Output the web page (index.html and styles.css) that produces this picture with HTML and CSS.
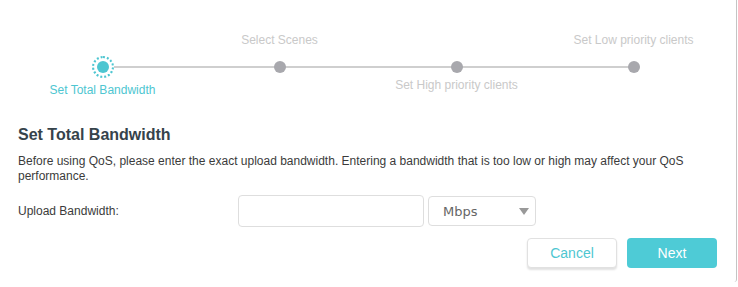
FILE: index.html
```html
<!DOCTYPE html>
<html>
<head>
  <title>QoS - Set Total Bandwidth</title>
  <link rel="stylesheet" href="styles.css">
</head>
<body>
<div class="wizard">
  <div class="stepper">
    <div class="step active">
      <span class="step-label top"></span>
      <span class="step-dot"></span>
      <span class="step-label bottom">Set Total Bandwidth</span>
    </div>
    <div class="step">
      <span class="step-label top">Select Scenes</span>
      <span class="step-dot"></span>
      <span class="step-label bottom"></span>
    </div>
    <div class="step">
      <span class="step-label top"></span>
      <span class="step-dot"></span>
      <span class="step-label bottom">Set High priority clients</span>
    </div>
    <div class="step last">
      <span class="step-label top">Set Low priority clients</span>
      <span class="step-dot"></span>
      <span class="step-label bottom"></span>
    </div>
  </div>

  <div class="wizard-body">
    <h2 class="wizard-title">Set Total Bandwidth</h2>
    <p class="wizard-desc">Before using QoS, please enter the exact upload bandwidth. Entering a bandwidth that is too low or high may affect your QoS performance.</p>

    <div class="form-row">
      <label for="upload-bw" class="form-label">Upload Bandwidth:</label>
      <input type="text" id="upload-bw" class="text-input" />
      <div class="select-box">
        <span class="select-value">Mbps</span>
        <span class="select-arrow"></span>
      </div>
    </div>

    <div class="wizard-controls">
      <button class="btn btn-cancel">Cancel</button>
      <button class="btn btn-next">Next</button>
    </div>
  </div>
</div>
</body>
</html>
```

FILE: styles.css
```css
html, body {
  margin: 0;
  padding: 0;
  background: #fff;
  font-family: "Liberation Sans", Arial, sans-serif;
}

.wizard {
  width: 736px;
  height: 282px;
  border-right: 1px solid #c4c4c4;
  border-bottom-right-radius: 3px;
}

/* stepper */
.stepper {
  display: grid;
  grid-template-columns: repeat(4, 177px);
  padding: 32px 0 0 14px;
}

.step {
  display: flex;
  flex-direction: column;
  align-items: center;
  position: relative;
}

.step::after {
  content: "";
  position: absolute;
  left: 50%;
  width: 177px;
  top: 34px;
  height: 2px;
  background: #cfcfcf;
  z-index: 0;
}

.step.last::after {
  display: none;
}

.step-label {
  display: block;
  height: 16px;
  line-height: 16px;
  font-size: 12px;
  color: #c9c9c9;
  white-space: nowrap;
}

.step-label.top {
  margin-bottom: 9px;
}

.step-dot {
  display: block;
  width: 12px;
  height: 12px;
  margin: 4px 0;
  border-radius: 50%;
  background: #a8a8ad;
  position: relative;
  z-index: 1;
}

.step.active .step-dot {
  background: #4ec6d1;
  box-shadow: 0 0 0 5px #fff;
}

.step.active .step-dot::before {
  content: "";
  position: absolute;
  left: -5px;
  top: -5px;
  width: 18px;
  height: 18px;
  border: 2px dotted #4ec6d1;
  border-radius: 50%;
}

.step.active .step-label.bottom {
  color: #4ec6d1;
  padding-top: 5px;
}

/* body */
.wizard-body {
  padding: 0 19px 0 18px;
}

.wizard-title {
  margin: 27px 0 0;
  font-size: 16px;
  line-height: 20px;
  font-weight: bold;
  color: #36434b;
}

.wizard-desc {
  margin: 9px 0 0;
  font-size: 12px;
  line-height: 15px;
  color: #3b3b3b;
  max-width: 680px;
}

.form-row {
  display: flex;
  align-items: center;
  margin-top: 11px;
}

.form-label {
  flex: 0 0 220px;
  font-size: 12px;
  color: #3b3b3b;
}

.text-input {
  width: 186px;
  height: 32px;
  box-sizing: border-box;
  border: 1px solid #dedede;
  border-radius: 4px;
  padding: 0 8px;
  outline: none;
}

.select-box {
  display: flex;
  align-items: center;
  justify-content: space-between;
  margin-left: 4px;
  width: 108px;
  height: 30px;
  box-sizing: border-box;
  border: 1px solid #dedede;
  border-radius: 4px;
  padding: 0 6px 0 14px;
}

.select-value {
  font-family: "DejaVu Sans", Verdana, sans-serif;
  font-size: 13px;
  color: #666;
}

.select-arrow {
  width: 0;
  height: 0;
  border-left: 5px solid transparent;
  border-right: 5px solid transparent;
  border-top: 7px solid #999;
}

.wizard-controls {
  display: flex;
  justify-content: flex-end;
  gap: 10px;
  margin-top: 11px;
}

.btn {
  width: 90px;
  height: 30px;
  border-radius: 4px;
  font-family: "Liberation Sans", Arial, sans-serif;
  font-size: 14px;
  cursor: pointer;
}

.btn-cancel {
  background: #fff;
  color: #4ec6d1;
  border: 1px solid #e1e1e1;
  box-shadow: 0 2px 2px rgba(0, 0, 0, 0.12);
}

.btn-next {
  background: #4ecbd6;
  color: #fff;
  border: none;
}
```
